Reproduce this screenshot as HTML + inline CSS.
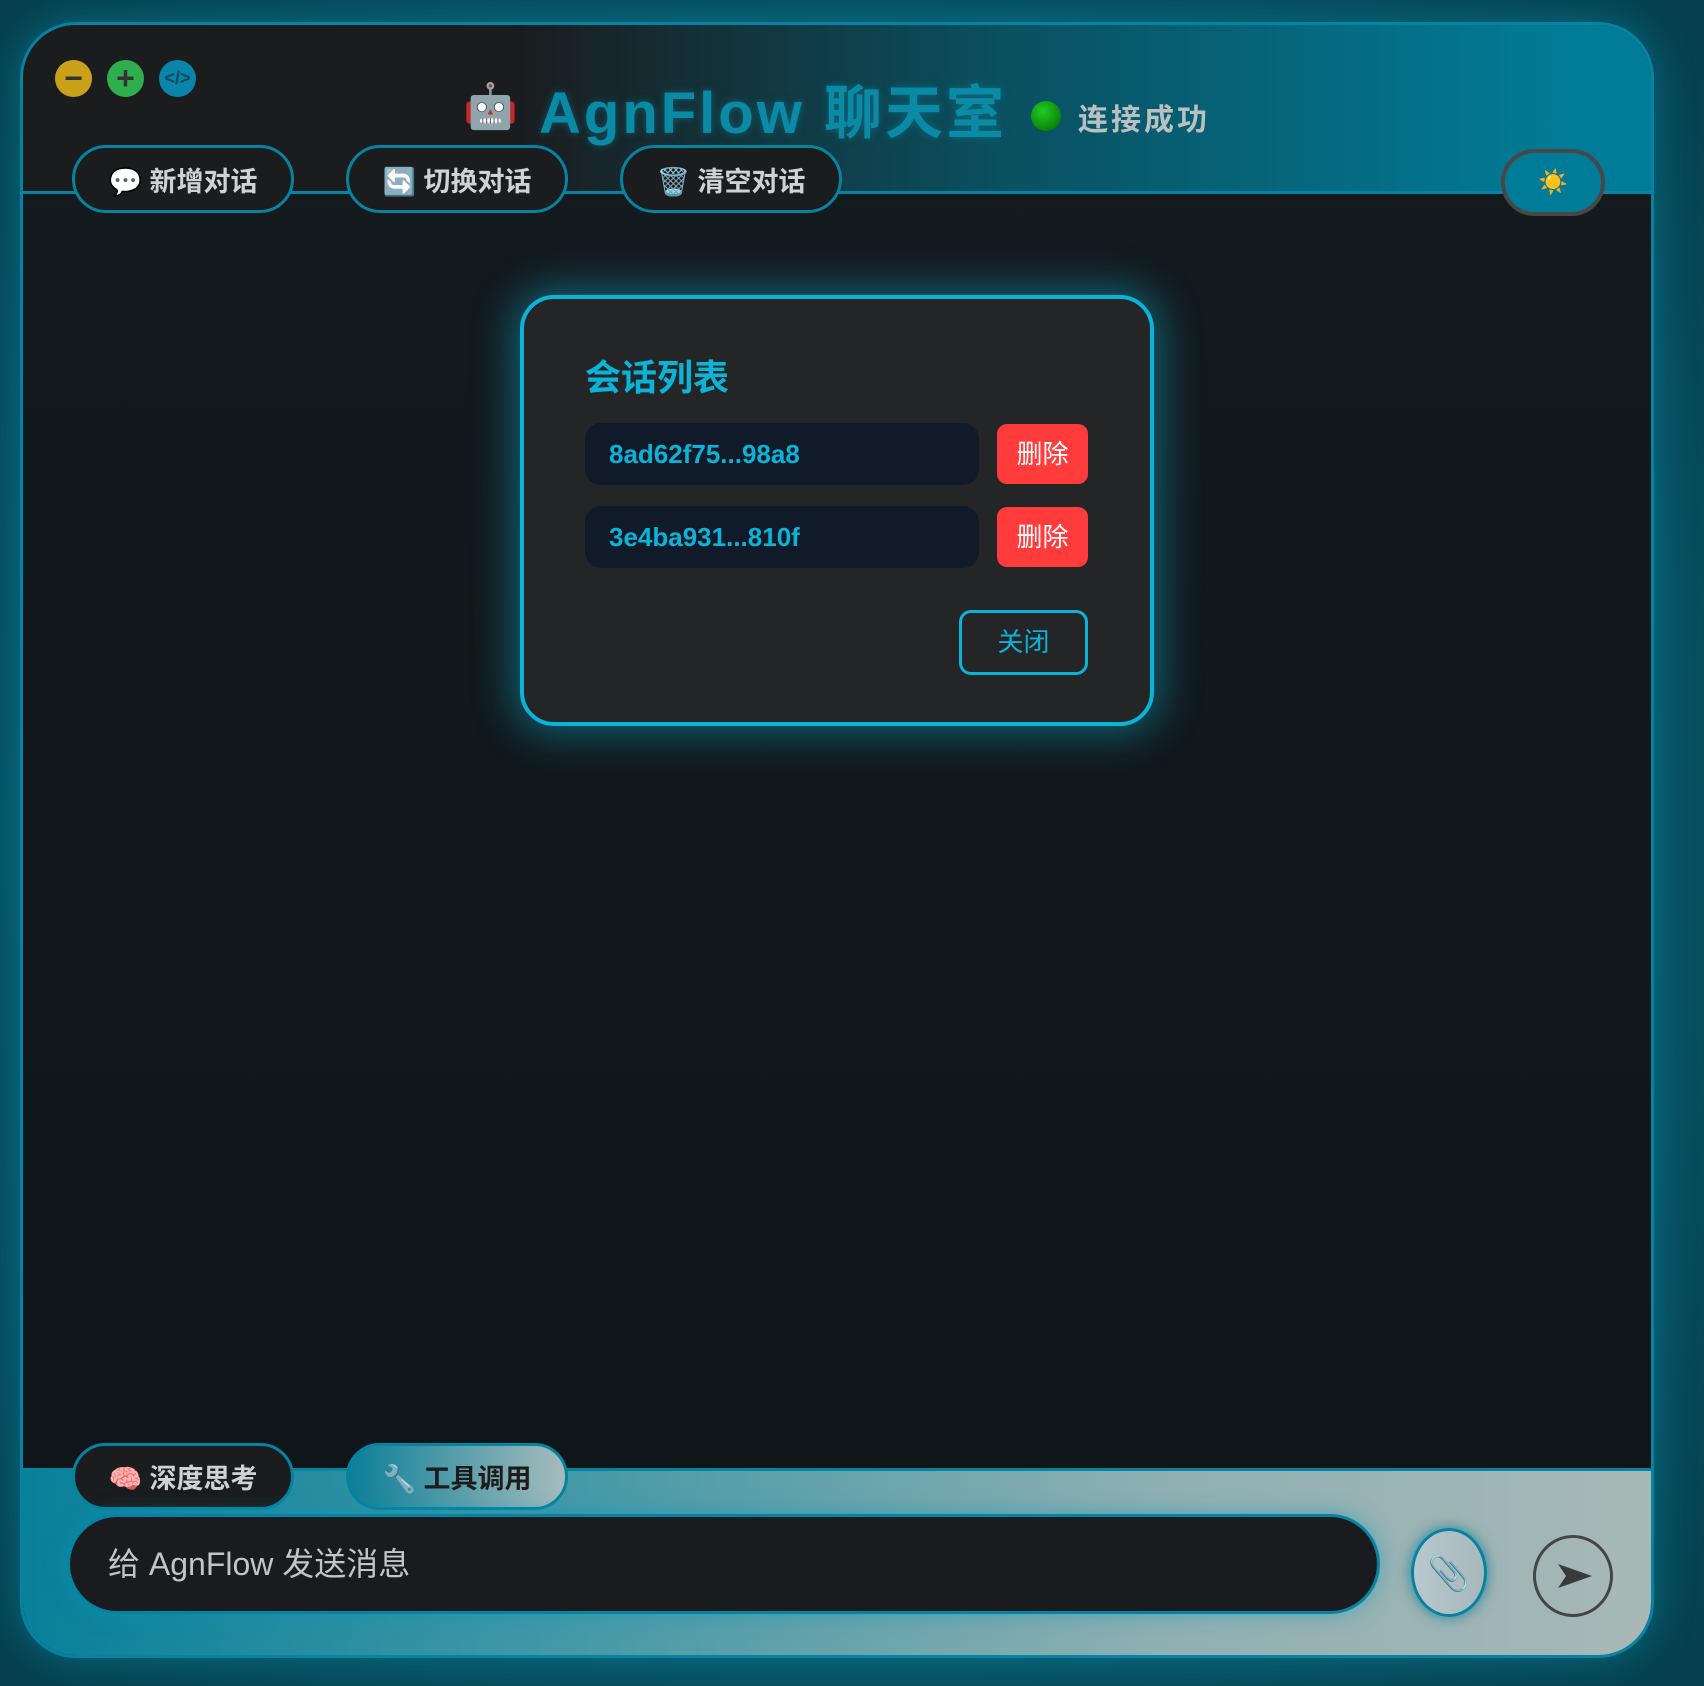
<!DOCTYPE html>
<html><head><meta charset="utf-8"><style>
*{box-sizing:border-box;margin:0;padding:0}
body{width:1704px;height:1686px;overflow:hidden;font-family:"Liberation Sans","Noto Sans CJK SC",sans-serif;
background:radial-gradient(ellipse at 50% 50%,#0a6a80 0%,#075466 60%,#063f4d 100%);position:relative}
.win{position:absolute;left:20px;top:22px;width:1634px;height:1636px;border:3px solid #0683a0;border-radius:56px;overflow:hidden;
background:linear-gradient(180deg,#141a1e,#0e161a);box-shadow:0 0 40px rgba(0,180,220,.35)}
.head{position:absolute;left:0;top:0;right:0;height:169px;background:linear-gradient(90deg,#1a1c1e 0%,#1a1c1e 30%,#0a5060 60%,#017c98 95%);border-bottom:3px solid #0683a0}
.dot{position:absolute;top:35px;width:37px;height:37px;border-radius:50%;font-weight:bold;color:#333;text-align:center;line-height:36px;font-size:32px}
.robot{position:absolute;left:440px;top:55px;font-size:44px}
.title{position:absolute;left:516px;top:41px;font-size:58px;font-weight:bold;color:#0a8aa5;letter-spacing:3px;white-space:nowrap;text-shadow:0 0 8px rgba(10,140,170,.5)}
.status{position:absolute;left:1055px;top:70px;font-size:30px;font-weight:bold;color:#b8c0c2;letter-spacing:3px}
.gdot{position:absolute;left:1008px;top:76px;width:30px;height:30px;border-radius:50%;background:radial-gradient(circle at 40% 35%,#2c2,#060)}
.tab{position:absolute;top:120px;width:222px;height:68px;border:3px solid #0683a0;border-radius:34px;background:#1a1c1e;color:#cfd2d4;font-weight:bold;font-size:27px;display:flex;align-items:center;justify-content:center;gap:8px}
.theme{position:absolute;left:1478px;top:124px;width:104px;height:67px;border:4px solid #474747;border-radius:34px;background:#017c98;text-align:center;line-height:60px;font-size:24px}
.foot{position:absolute;left:0;right:0;top:1443px;bottom:0;background:linear-gradient(90deg,#08809a 0%,#3d97a6 30%,#8fb0b2 70%,#a8b8b7 100%);border-top:3px solid #0683a0}
.btab{position:absolute;top:1418px;width:222px;height:67px;border:3px solid #0683a0;border-radius:34px;font-weight:bold;font-size:27px;display:flex;align-items:center;justify-content:center;gap:8px}
.input{position:absolute;left:44px;top:1489px;width:1313px;height:100px;border-radius:50px;background:#1a1b1e;border:3px solid #0683a0;color:#c2c4c6;font-size:32px;line-height:94px;padding-left:38px;box-shadow:0 0 20px rgba(0,150,190,.5)}
.clip{position:absolute;left:1388px;top:1503px;width:76px;height:89px;border-radius:50%;background:linear-gradient(90deg,#b8c8cc,#a6b8bb);border:3px solid #0683a0;box-shadow:0 0 14px rgba(0,120,150,.8);text-align:center;line-height:86px;font-size:34px;color:#666}
.send{position:absolute;left:1510px;top:1510px;width:80px;height:82px;border-radius:50%;border:3px solid #454545}
.modal{position:absolute;left:520px;top:295px;width:634px;height:431px;border:4px solid #0ab4d8;border-radius:34px;background:#242527;box-shadow:0 0 40px 8px rgba(10,180,216,.45)}
.mt{position:absolute;left:61px;top:50px;font-size:36px;font-weight:bold;color:#0ab4d8}
.row{position:absolute;left:61px;width:394px;height:62px;border-radius:16px;background:#101a28;color:#0ab4d8;font-weight:bold;font-size:26px;line-height:62px;padding-left:24px}
.del{position:absolute;left:473px;width:91px;height:60px;border-radius:10px;background:#ff3b3b;color:#fff;font-size:26px;text-align:center;line-height:60px}
.close{position:absolute;left:435px;top:311px;width:129px;height:65px;border:3px solid #0ab4d8;border-radius:12px;color:#0ab4d8;font-size:26px;text-align:center;line-height:59px}
</style></head><body>
<div class="win">
 <div class="head">
  <div class="dot" style="left:32px;background:#c9a21a">−</div>
  <div class="dot" style="left:84px;background:#2fae4e">+</div>
  <div class="dot" style="left:136px;background:#0a84a8;font-size:18px;color:#06485c">&lt;/&gt;</div>
  <div class="robot">🤖</div>
  <div class="title">AgnFlow 聊天室</div>
  <div class="gdot"></div>
  <div class="status">连接成功</div>
 </div>
 <div class="tab" style="left:49px">💬 新增对话</div>
 <div class="tab" style="left:323px">🔄 切换对话</div>
 <div class="tab" style="left:597px">🗑️ 清空对话</div>
 <div class="theme">☀️</div>
 <div class="foot"></div>
 <div class="btab" style="left:49px;background:#1a1c1e;color:#cfd2d4">🧠 深度思考</div>
 <div class="btab" style="left:323px;background:linear-gradient(90deg,#0b7f99,#a6bcbc);color:#1c1c1c">🔧 工具调用</div>
 <div class="input">给 AgnFlow 发送消息</div>
 <div class="clip">📎</div>
 <div class="send"><svg width="74" height="76" viewBox="0 0 74 76"><path d="M22 26 L56 38 L22 50 L30 38 Z" fill="#3a3a3a"/></svg></div>
</div>
<div class="modal">
 <div class="mt">会话列表</div>
 <div class="row" style="top:124px">8ad62f75...98a8</div>
 <div class="del" style="top:125px">删除</div>
 <div class="row" style="top:207px">3e4ba931...810f</div>
 <div class="del" style="top:208px">删除</div>
 <div class="close">关闭</div>
</div>
</body></html>
